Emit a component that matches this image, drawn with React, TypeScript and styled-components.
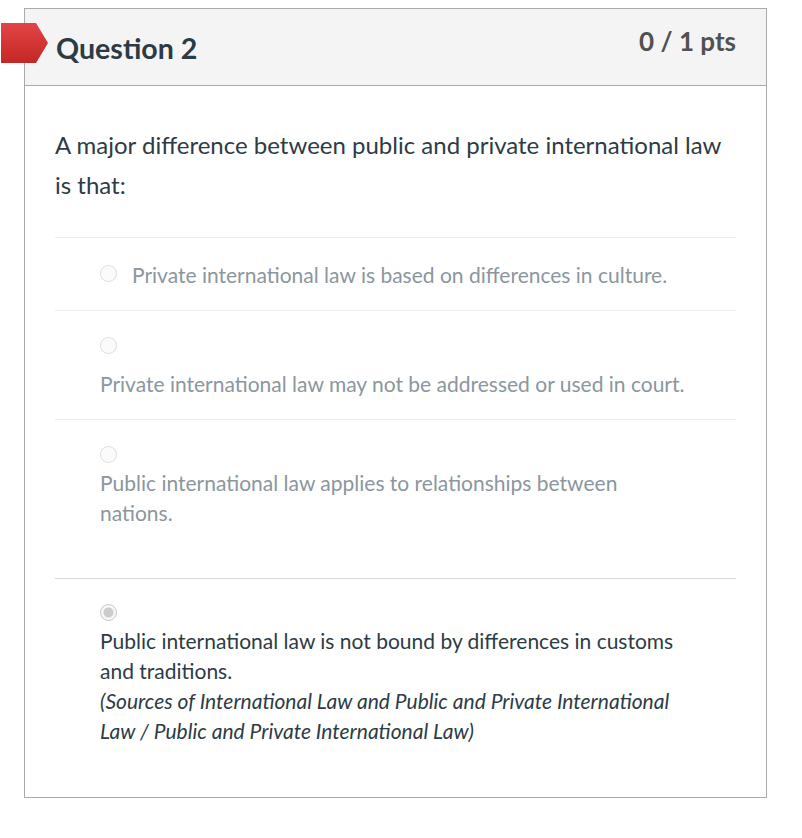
import React from 'react'
import styled, { createGlobalStyle } from 'styled-components'

const Global = createGlobalStyle`
  body {
    margin: 0;
    background: #fff;
    font-family: Lato, "Noto Sans", sans-serif;
  }
`

type Answer = {
  text: string
  selected?: boolean
  inline?: boolean
  note?: string
  gap: number
  bottom: number
}

const answers: Answer[] = [
  { text: 'Private international law is based on differences in culture.', inline: true, gap: 15, bottom: 20 },
  { text: 'Private international law may not be addressed or used in court.', gap: 15, bottom: 20 },
  { text: 'Public international law applies to relationships between nations.', gap: 5, bottom: 50 },
  {
    text: 'Public international law is not bound by differences in customs and traditions.',
    selected: true,
    note: '(Sources of International Law and Public and Private International Law / Public and Private International Law)',
    gap: 5,
    bottom: 51,
  },
]

export default function App() {
  return (
    <Page>
      <Global />
      <Card>
        <WrongFlag />
        <Header>
          <Title>Question 2</Title>
          <Points>0 / 1 pts</Points>
        </Header>
        <Body>
          <QuestionText>
            A major difference between public and private international law is that:
          </QuestionText>
          {answers.map((a, i) => (
            <AnswerRow key={i} $inline={a.inline} $selected={a.selected} $gap={a.gap} $bottom={a.bottom}>
              <Radio $selected={a.selected} $inline={a.inline} />
              <AnswerText $selected={a.selected}>
                {a.text}
                {a.note && <Note>{a.note}</Note>}
              </AnswerText>
            </AnswerRow>
          ))}
        </Body>
      </Card>
    </Page>
  )
}

const Page = styled.div`
  padding: 8px 36px 40px 24px;
`

const Card = styled.div`
  position: relative;
  width: 743px;
  box-sizing: border-box;
  border: 1px solid #aaaaaa;
`

const WrongFlag = styled.div`
  position: absolute;
  left: -24px;
  top: 14px;
  width: 47px;
  height: 40px;
  background: linear-gradient(#e24545, #c52626);
  clip-path: polygon(0 0, 35px 0, 47px 50%, 35px 100%, 0 100%);
`

const Header = styled.div`
  display: flex;
  justify-content: space-between;
  align-items: flex-start;
  height: 77px;
  box-sizing: border-box;
  background: #f4f4f4;
  border-bottom: 1px solid #aaaaaa;
  padding: 0 30px 0 31px;
`

const Title = styled.h2`
  margin: 22px 0 0;
  font-size: 28.6px;
  font-weight: 700;
  color: #2d3b45;
`

const Points = styled.div`
  margin-top: 16px;
  font-size: 26px;
  font-weight: 700;
  color: #515151;
`

const Body = styled.div`
  padding: 39px 30px 0;
`

const QuestionText = styled.div`
  font-size: 24px;
  line-height: 40px;
  color: #2d3b45;
  margin-bottom: 32px;
`

const AnswerRow = styled.div<{ $inline?: boolean; $selected?: boolean; $gap: number; $bottom: number }>`
  display: flex;
  flex-direction: ${p => (p.$inline ? 'row' : 'column')};
  align-items: flex-start;
  gap: ${p => p.$gap}px;
  border-top: 1px solid ${p => (p.$selected ? '#d9d9d9' : '#ececec')};
  padding: ${p => (p.$inline ? 22 : p.$selected ? 25 : 26)}px 45px ${p => p.$bottom}px;
`

const Radio = styled.span<{ $selected?: boolean; $inline?: boolean }>`
  flex: none;
  width: 17px;
  height: 17px;
  box-sizing: border-box;
  border-radius: 50%;
  border: 1px solid ${p => (p.$selected ? '#c6c6c6' : '#dedede')};
  background: ${p =>
    p.$selected ? 'radial-gradient(circle, #cccccc 0 4.5px, #f7f7f7 5.5px)' : '#fbfbfb'};
  margin-top: ${p => (p.$inline ? 5 : 0)}px;
`

const AnswerText = styled.div<{ $selected?: boolean }>`
  max-width: 590px;
  font-size: 21px;
  line-height: 30px;
  color: ${p => (p.$selected ? '#2d3b45' : '#8b969e')};
`

const Note = styled.div`
  font-style: italic;
`
